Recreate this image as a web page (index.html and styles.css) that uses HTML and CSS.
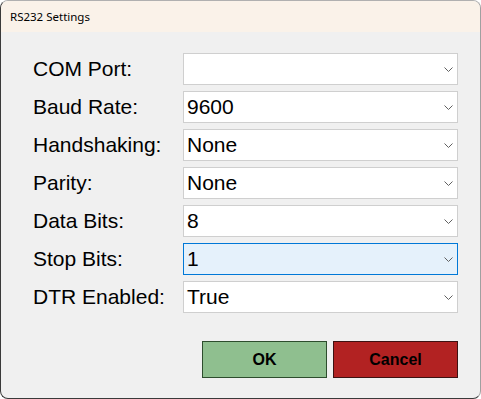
FILE: index.html
```html
<!DOCTYPE html>
<html>
<head>
<meta charset="utf-8">
<link rel="stylesheet" href="styles.css">
</head>
<body>
<div class="window">
  <div class="titlebar">RS232 Settings</div>
  <div class="content">
    <div class="form">
      <div class="label">COM Port:</div>
      <div class="combo"><span class="value"></span><svg class="chev" width="9" height="5" viewBox="0 0 9 5"><path d="M0.5 0.5 L4.5 4.5 L8.5 0.5" fill="none" stroke="#606060" stroke-width="1"/></svg></div>
      <div class="label">Baud Rate:</div>
      <div class="combo"><span class="value">9600</span><svg class="chev" width="9" height="5" viewBox="0 0 9 5"><path d="M0.5 0.5 L4.5 4.5 L8.5 0.5" fill="none" stroke="#606060" stroke-width="1"/></svg></div>
      <div class="label">Handshaking:</div>
      <div class="combo"><span class="value">None</span><svg class="chev" width="9" height="5" viewBox="0 0 9 5"><path d="M0.5 0.5 L4.5 4.5 L8.5 0.5" fill="none" stroke="#606060" stroke-width="1"/></svg></div>
      <div class="label">Parity:</div>
      <div class="combo"><span class="value">None</span><svg class="chev" width="9" height="5" viewBox="0 0 9 5"><path d="M0.5 0.5 L4.5 4.5 L8.5 0.5" fill="none" stroke="#606060" stroke-width="1"/></svg></div>
      <div class="label">Data Bits:</div>
      <div class="combo"><span class="value">8</span><svg class="chev" width="9" height="5" viewBox="0 0 9 5"><path d="M0.5 0.5 L4.5 4.5 L8.5 0.5" fill="none" stroke="#606060" stroke-width="1"/></svg></div>
      <div class="label">Stop Bits:</div>
      <div class="combo focused"><span class="value">1</span><svg class="chev" width="9" height="5" viewBox="0 0 9 5"><path d="M0.5 0.5 L4.5 4.5 L8.5 0.5" fill="none" stroke="#606060" stroke-width="1"/></svg></div>
      <div class="label">DTR Enabled:</div>
      <div class="combo"><span class="value">True</span><svg class="chev" width="9" height="5" viewBox="0 0 9 5"><path d="M0.5 0.5 L4.5 4.5 L8.5 0.5" fill="none" stroke="#606060" stroke-width="1"/></svg></div>
    </div>
    <div class="buttons">
      <div class="btn ok">OK</div>
      <div class="btn cancel">Cancel</div>
    </div>
  </div>
</div>
</body>
</html>
```
FILE: styles.css
```css
html, body {
  margin: 0;
  padding: 0;
  background: #ffffff;
}
.window {
  width: 481px;
  height: 399px;
  box-sizing: border-box;
  border-top: 1px solid #b0b0b0;
  border-right: 1px solid #a0a0a0;
  border-left: 1px solid #3a3a3a;
  border-bottom: 1px solid #3a3a3a;
  border-radius: 8px;
  overflow: hidden;
  background: #f0f0f0;
  display: flex;
  flex-direction: column;
}
.titlebar {
  height: 31px;
  background: #faf2e9;
  font-family: "Noto Sans", "Open Sans", sans-serif;
  font-size: 11.5px;
  line-height: 31px;
  padding-left: 9px;
  color: #000;
}
.content {
  padding: 21px 0 0 32px;
  display: flex;
  flex-direction: column;
}
.form {
  display: grid;
  grid-template-columns: 150px 275px;
  grid-auto-rows: 32px;
  row-gap: 6px;
  align-items: center;
}
.label {
  font-family: "Liberation Sans", Arial, sans-serif;
  font-size: 21px;
  color: #000;
  line-height: 32px;
}
.combo {
  height: 32px;
  box-sizing: border-box;
  border: 1px solid #cfcfcf;
  background: #ffffff;
  display: flex;
  align-items: center;
  justify-content: space-between;
  padding: 0 4px 0 3px;
  font-family: "Liberation Sans", Arial, sans-serif;
  font-size: 21px;
  color: #000;
}
.combo.focused {
  background: #e5f1fb;
  border-color: #0078d7;
}
.chev {
  display: block;
  margin-top: 1px;
}
.buttons {
  margin-top: 28px;
  margin-left: 169px;
  display: flex;
  gap: 6px;
}
.btn {
  width: 125px;
  height: 37px;
  box-sizing: border-box;
  display: flex;
  align-items: center;
  justify-content: center;
  font-family: "Liberation Sans", Arial, sans-serif;
  font-weight: bold;
  font-size: 16px;
  color: #000;
}
.ok {
  background: #8fbf8f;
  border: 1px solid #2d4d2d;
}
.cancel {
  background: #b22222;
  border: 1px solid #3d1212;
}
```
